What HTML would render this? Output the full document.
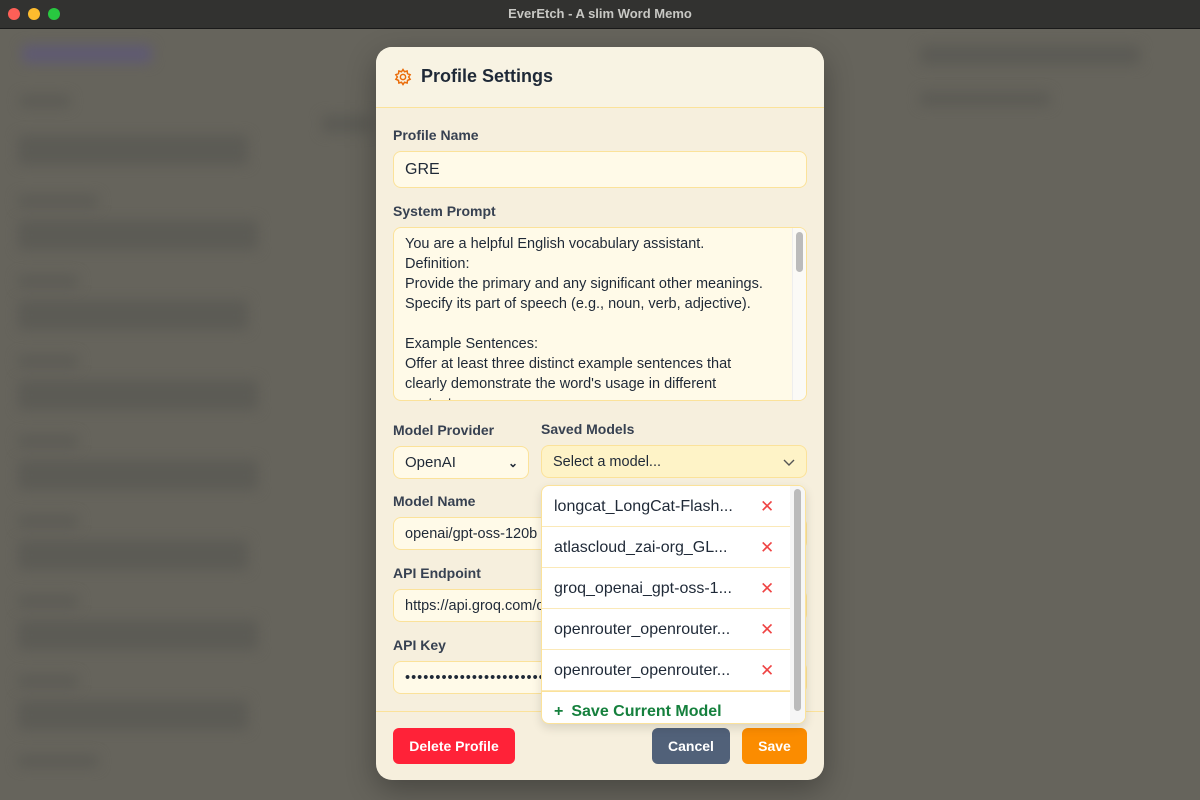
<!DOCTYPE html>
<html><head><style>
*{box-sizing:border-box;margin:0;padding:0}
body{width:1200px;height:800px;overflow:hidden;font-family:"Liberation Sans",sans-serif;background:#66645c;position:relative}
.tb{position:absolute;left:0;top:0;width:1200px;height:29px;background:#323230;border-bottom:1px solid #1a1a1a;color:#c8c8c4;font-size:13px;font-weight:bold;text-align:center;line-height:28px}
.dot{position:absolute;top:8px;width:12px;height:12px;border-radius:50%}
.bl{position:absolute;background:#5c5b55;filter:blur(6px);border-radius:4px}
.m{position:absolute;left:376px;top:47px;width:448px;height:733px;background:#f6efdd;border-radius:16px;overflow:hidden;color:#1f2937;box-shadow:0 10px 30px rgba(0,0,0,.3)}
.hd{position:absolute;left:0;top:0;width:448px;height:61px;background:#f8f3e3;border-bottom:1px solid #fbe29a}
.hd span{position:absolute;left:45px;top:19px;font-size:18px;font-weight:bold;color:#1f2937}
.lb{position:absolute;font-size:14px;font-weight:bold;color:#374151;left:17px}
.in{position:absolute;background:#fffae8;border:1px solid #fbe29a;border-radius:8px;font-size:14.5px;color:#1f2937;padding-left:11px;display:flex;align-items:center}
.ft{position:absolute;left:0;top:664px;width:448px;border-top:1px solid #fbe29a}
.btn{position:absolute;top:681px;height:36px;border-radius:6px;color:#fff;font-weight:bold;font-size:14px;display:flex;align-items:center;justify-content:center}
.dd{position:absolute;left:541px;top:485px;width:265px;height:239px;background:#fff;border:1px solid #fbe29a;border-radius:8px;box-shadow:0 4px 10px rgba(0,0,0,.12);overflow:hidden}
.it{position:absolute;left:0;width:249px;height:41px;border-bottom:1px solid #fbe9b8;font-size:16px;color:#1f2937;padding-left:12px;line-height:41px}
.it b{position:absolute;left:218px;top:0;color:#ef4444;font-weight:normal;font-size:17px}
</style></head><body>
<div class="tb">EverEtch - A slim Word Memo
<div class="dot" style="left:8px;background:#fe5f57"></div><div class="dot" style="left:28px;background:#febc2e"></div><div class="dot" style="left:48px;background:#28c840"></div></div>
<div class="bl" style="left:22px;top:45px;width:130px;height:18px;background:#5f5a72"></div>
<div class="bl" style="left:20px;top:95px;width:50px;height:12px"></div>
<div class="bl" style="left:18px;top:135px;width:230px;height:30px"></div>
<div class="bl" style="left:18px;top:195px;width:80px;height:12px"></div>
<div class="bl" style="left:18px;top:220px;width:240px;height:30px"></div>
<div class="bl" style="left:18px;top:275px;width:60px;height:12px"></div>
<div class="bl" style="left:18px;top:300px;width:230px;height:30px"></div>
<div class="bl" style="left:18px;top:355px;width:60px;height:12px"></div>
<div class="bl" style="left:18px;top:380px;width:240px;height:30px"></div>
<div class="bl" style="left:18px;top:435px;width:60px;height:12px"></div>
<div class="bl" style="left:18px;top:460px;width:240px;height:30px"></div>
<div class="bl" style="left:18px;top:515px;width:60px;height:12px"></div>
<div class="bl" style="left:18px;top:540px;width:230px;height:30px"></div>
<div class="bl" style="left:18px;top:595px;width:60px;height:12px"></div>
<div class="bl" style="left:18px;top:620px;width:240px;height:30px"></div>
<div class="bl" style="left:18px;top:675px;width:60px;height:12px"></div>
<div class="bl" style="left:18px;top:700px;width:230px;height:30px"></div>
<div class="bl" style="left:18px;top:755px;width:80px;height:12px"></div>
<div class="bl" style="left:322px;top:115px;width:50px;height:18px"></div>
<div class="bl" style="left:920px;top:92px;width:130px;height:14px"></div>
<div class="bl" style="left:920px;top:45px;width:220px;height:20px"></div>
<div class="m">
<div class="hd"><svg style="position:absolute;left:18px;top:21px" width="18" height="18" viewBox="0 0 24 24" fill="none" stroke="#ea6c0a" stroke-width="2"><path d="M12 2l2 3 3.5-1 .5 3.5 3.5 1.5-2 3 2 3-3.5 1.5-.5 3.5-3.5-1-2 3-2-3-3.5 1-.5-3.5L2.5 15l2-3-2-3L6 7.5 6.5 4 10 5z"/><circle cx="12" cy="12" r="3.5"/></svg><span>Profile Settings</span></div>
<div class="lb" style="top:80px">Profile Name</div>
<div class="in" style="left:17px;top:104px;width:414px;height:37px;font-size:16px">GRE</div>
<div class="lb" style="top:156px">System Prompt</div>
<div class="in" style="left:17px;top:180px;width:414px;height:174px;align-items:flex-start;padding-top:6px;line-height:20px;font-size:14.5px;display:block;overflow:hidden">You are a helpful English vocabulary assistant.<br>Definition:<br>Provide the primary and any significant other meanings.<br>Specify its part of speech (e.g., noun, verb, adjective).<br><br>Example Sentences:<br>Offer at least three distinct example sentences that<br>clearly demonstrate the word's usage in different<br>contexts.
<div style="position:absolute;right:0;top:0;width:14px;height:172px;background:#fbfaf6;border-left:1px solid #eee"><div style="margin:4px 3px;width:7px;height:40px;background:#bbb;border-radius:4px"></div></div></div>
<div class="lb" style="top:375px">Model Provider</div>
<div class="in" style="left:17px;top:399px;width:136px;height:33px;font-size:15px">OpenAI<span style="position:absolute;right:10px;font-size:12px;font-weight:bold">&#8964;</span></div>
<div class="lb" style="left:165px;top:374px">Saved Models</div>
<div class="in" style="left:165px;top:398px;width:266px;height:33px;background:#fef3c7;font-size:14.5px">Select a model...<svg style="position:absolute;right:10px" width="14" height="14" viewBox="0 0 14 14"><path d="M2 5l5 5 5-5" stroke="#555" fill="none" stroke-width="1.4"/></svg></div>
<div class="lb" style="top:446px">Model Name</div>
<div class="in" style="left:17px;top:470px;width:414px;height:33px">openai/gpt-oss-120b</div>
<div class="lb" style="top:518px">API Endpoint</div>
<div class="in" style="left:17px;top:542px;width:414px;height:33px">https://api.groq.com/openai/v1</div>
<div class="lb" style="top:590px">API Key</div>
<div class="in" style="left:17px;top:614px;width:414px;height:33px;letter-spacing:1px">••••••••••••••••••••••••</div>
<div class="ft"></div>
<div class="btn" style="left:17px;width:122px;background:#ff2238">Delete Profile</div>
<div class="btn" style="left:276px;width:78px;background:#516179">Cancel</div>
<div class="btn" style="left:366px;width:65px;background:#fb8c00">Save</div>
</div>
<div class="dd">
<div class="it" style="top:0">longcat_LongCat-Flash...<b>✕</b></div>
<div class="it" style="top:41px">atlascloud_zai-org_GL...<b>✕</b></div>
<div class="it" style="top:82px">groq_openai_gpt-oss-1...<b>✕</b></div>
<div class="it" style="top:123px">openrouter_openrouter...<b>✕</b></div>
<div class="it" style="top:164px">openrouter_openrouter...<b>✕</b></div>
<div style="position:absolute;left:0;top:205px;width:249px;border-top:1px solid #fbe29a;height:34px;padding-left:12px;color:#15803d;font-weight:bold;font-size:16px;line-height:40px"><span style="margin-right:8px">+</span>Save Current Model</div>
<div style="position:absolute;right:0;top:0;width:15px;height:239px;background:#f6f6f6"><div style="margin:3px 4px;width:7px;height:222px;background:#bbb;border-radius:4px"></div></div>
</div>
</body></html>
